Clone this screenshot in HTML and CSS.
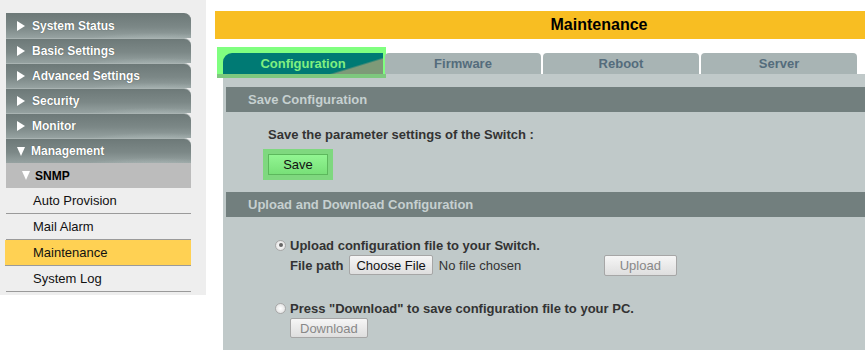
FILE: index.html
```html
<!DOCTYPE html>
<html lang="en">
<head>
    <meta charset="UTF-8">
    <title>Maintenance</title>
    <link rel="stylesheet" href="styles.css">
</head>
<body>
    <!-- Left menu -->
    <div class="sidebar">
        <div class="menu">
            <div class="menu-item"><span class="arrow right"></span>System Status</div>
            <div class="menu-item"><span class="arrow right"></span>Basic Settings</div>
            <div class="menu-item"><span class="arrow right"></span>Advanced Settings</div>
            <div class="menu-item"><span class="arrow right"></span>Security</div>
            <div class="menu-item"><span class="arrow right"></span>Monitor</div>
            <div class="menu-item"><span class="arrow down"></span>Management</div>
            <div class="sub-title"><span class="arrow down"></span>SNMP</div>
            <div class="sub-item">Auto Provision</div>
            <div class="sub-item">Mail Alarm</div>
            <div class="sub-item active">Maintenance</div>
            <div class="sub-item">System Log</div>
        </div>
    </div>

    <!-- Main area -->
    <div class="main">
        <div class="page-title">Maintenance</div>

        <div class="tabs">
            <div class="tab current">Configuration</div>
            <div class="tab">Firmware</div>
            <div class="tab">Reboot</div>
            <div class="tab">Server</div>
        </div>

        <div class="panel">
            <div class="section-head">Save Configuration</div>
            <div class="section-body">
                <p class="label">Save the parameter settings of the Switch :</p>
                <button class="save-btn">Save</button>
            </div>

            <div class="section-head">Upload and Download Configuration</div>
            <div class="section-body upload">
                <div class="option">
                    <span class="radio checked"></span>
                    <span class="label">Upload configuration file to your Switch.</span>
                </div>
                <div class="file-row">
                    <span class="label">File path</span>
                    <button class="btn">Choose File</button>
                    <span class="no-file">No file chosen</span>
                    <button class="btn disabled upload-btn">Upload</button>
                </div>

                <div class="option second">
                    <span class="radio"></span>
                    <span class="label">Press "Download" to save configuration file to your PC.</span>
                </div>
                <div class="file-row">
                    <button class="btn disabled">Download</button>
                </div>
            </div>
        </div>
    </div>
</body>
</html>
```

FILE: styles.css
```css
body {
    margin: 0;
    font-family: "Liberation Sans", Arial, sans-serif;
    background: white;
    display: flex;
    align-items: flex-start;
    height: 350px;
    overflow: hidden;
}
.sidebar {
    width: 206px;
    height: 295px;
    background-color: #eeeeee;
    padding-top: 13px;
    box-sizing: border-box;
    flex-shrink: 0;
}
.menu {
    margin-left: 6px;
    width: 185px;
}
.menu-item {
    display: flex;
    align-items: center;
    height: 24px;
    border-top: 1px solid #a9b3b2;
    border-top-right-radius: 7px;
    background:
        radial-gradient(ellipse 120px 16px at 150px 30px, rgba(180, 192, 191, 0.9), rgba(180, 192, 191, 0) 70%),
        linear-gradient(#6d7978, #7c8887 55%, #96a2a1);
    color: white;
    font-size: 12px;
    font-weight: bold;
    text-shadow: 0 0 1px #3c4544;
}
.menu-item:first-child {
    border-top-color: #6d7978;
}
.arrow {
    display: inline-block;
    width: 0;
    height: 0;
}
.arrow.right {
    border-left: 8px solid white;
    border-top: 5px solid transparent;
    border-bottom: 5px solid transparent;
    margin: 0 7px 0 11px;
}
.arrow.down {
    border-top: 9px solid white;
    border-left: 4.5px solid transparent;
    border-right: 4.5px solid transparent;
    margin: 0 6px 0 11px;
}
.sub-title {
    display: flex;
    align-items: center;
    height: 25px;
    background-color: #bcbcbc;
    font-size: 12px;
    font-weight: bold;
    color: #000;
}
.sub-title .arrow.down {
    margin: 0 5px 0 16px;
}
.sub-item {
    height: 25px;
    border-bottom: 1px solid #9a9a9a;
    font-size: 13px;
    line-height: 25px;
    padding-left: 27px;
    color: #111;
}
.sub-item.active {
    background-color: #ffd153;
    margin-left: -1px;
    padding-left: 28px;
}
.main {
    margin-left: 9px;
    flex: 1;
    padding-top: 11px;
}
.page-title {
    height: 28px;
    background-color: #f8be22;
    text-align: center;
    padding-left: 118px;
    font-size: 16px;
    font-weight: bold;
    line-height: 27px;
    color: #000;
}
.tabs {
    display: flex;
    gap: 2px;
    margin-top: 14px;
    padding-left: 8px;
}
.tab {
    width: 156px;
    height: 21px;
    background-color: #a8b4b4;
    border-top-left-radius: 4px;
    border-top-right-radius: 4px;
    text-align: center;
    font-size: 13px;
    font-weight: bold;
    line-height: 21px;
    color: #546c7c;
}
.tab.current {
    width: 160px;
    background:
        linear-gradient(163deg, #007a74 76%, #7e9a78 79%);
    border-top-left-radius: 9px;
    border-top-right-radius: 0;
    color: #80f080;
    position: relative;
}
/* highlight frame around the selected tab */
.tab.current::before {
    content: "";
    position: absolute;
    left: -6px;
    top: -6px;
    right: -3px;
    bottom: -4px;
    background-color: #80ff80;
    z-index: -1;
}
.tab.current::after {
    content: "";
    position: absolute;
    left: -6px;
    right: -3px;
    bottom: -4px;
    height: 4px;
    background-color: #7ec87e;
}
.panel {
    margin-left: 8px;
    background-color: #c0c9c9;
    padding: 13px 0 20px 3px;
    height: 280px;
    box-sizing: border-box;
}
.section-head {
    height: 25px;
    background-color: #727f7e;
    color: #c6d0d0;
    font-size: 13px;
    font-weight: bold;
    line-height: 25px;
    padding-left: 22px;
}
.section-body {
    padding: 15px 0 17px 42px;
}
.label {
    font-size: 13px;
    font-weight: bold;
    color: #333;
}
p.label {
    margin: 0 0 12px 0;
}
.save-btn {
    width: 60px;
    height: 21px;
    font-family: "Liberation Sans", Arial, sans-serif;
    font-size: 13px;
    color: #111;
    background: linear-gradient(#92f592, #78e078);
    border: 1px solid #5cb85c;
    outline: 5px solid #7fd87f;
    padding: 0;
}
.upload {
    padding: 19px 0 0 49px;
}
.option {
    display: flex;
    align-items: center;
    gap: 4px;
    height: 18px;
}
.option.second {
    margin-top: 23px;
}
.radio {
    width: 11px;
    height: 11px;
    border-radius: 50%;
    border: 1px solid #a8a8a8;
    background: radial-gradient(#ffffff, #dcdcdc);
    box-sizing: border-box;
    position: relative;
}
.radio.checked::after {
    content: "";
    position: absolute;
    left: 2.5px;
    top: 2.5px;
    width: 4px;
    height: 4px;
    border-radius: 50%;
    background-color: #666;
}
.file-row {
    display: flex;
    align-items: center;
    padding-left: 15px;
    height: 22px;
}
.file-row .label {
    font-weight: bold;
    margin-right: 6px;
}
.btn {
    height: 20px;
    font-family: "Liberation Sans", Arial, sans-serif;
    font-size: 13px;
    color: #111;
    background: linear-gradient(#f6f6f6, #dedede);
    border: 1px solid #a6a6a6;
    border-radius: 2px;
    padding: 0 6px;
}
.btn.disabled {
    color: #888;
    padding: 0 9px;
}
.no-file {
    font-size: 13px;
    color: #333;
    margin-left: 6px;
    width: 165px;
}
.upload-btn {
    width: 73px;
    height: 21px;
}
```
